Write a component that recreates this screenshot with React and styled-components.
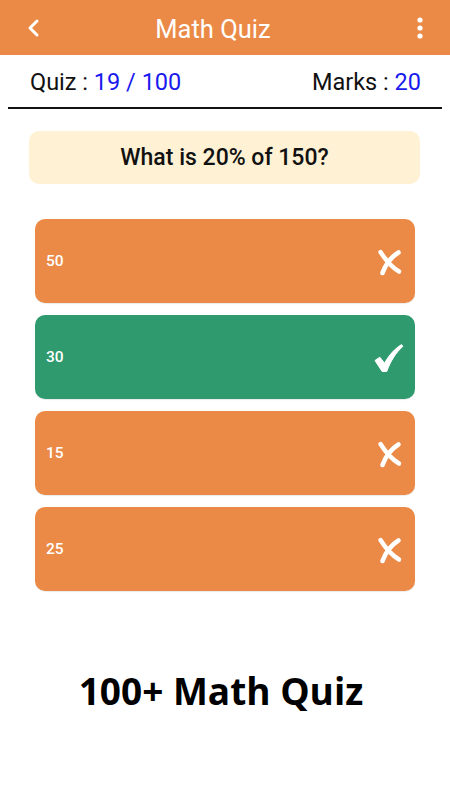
import React from 'react';
import styled, { createGlobalStyle } from 'styled-components';

const GlobalStyle = createGlobalStyle`
    html, body {
        margin: 0;
        padding: 0;
        background: #ffffff;
        font-family: Roboto, "Noto Sans", sans-serif;
    }
`;

const options = [
    { value: '50', correct: false },
    { value: '30', correct: true },
    { value: '15', correct: false },
    { value: '25', correct: false },
];

// brush style cross, white
const CrossMark = () => (
    <svg width="28" height="28" viewBox="0 0 28 28" fill="none">
        <path d="M5.5 4 C 9 9.5, 14 17.5, 24 23.5" stroke="#ffffff" strokeWidth="4.4" strokeLinecap="round" />
        <path d="M23.5 4.5 C 16 9, 11 15.5, 7.5 25" stroke="#ffffff" strokeWidth="4.6" strokeLinecap="round" />
    </svg>
);

const CheckMark = () => (
    <svg width="30" height="30" viewBox="0 0 30 30" fill="#ffffff">
        <path d="M1 17.5 L5.8 14.2 L10.6 20.2 C 15 12, 21 5.5, 27.6 1.6 L28.8 3.4 C 22 9.5, 16.5 18, 12.8 28.4 L8.2 28.6 Z" strokeLinejoin="round" stroke="#ffffff" strokeWidth="1" />
    </svg>
);

const App = () => {
    return (
        <>
            <GlobalStyle />
            <Page>
                <Header>
                    <IconButton aria-label="back">
                        <svg width="16" height="20" viewBox="0 0 16 20" fill="none">
                            <path d="M11 3 L4 10 L11 17" stroke="#ffffff" strokeWidth="3" strokeLinecap="round" strokeLinejoin="round" />
                        </svg>
                    </IconButton>
                    <Title>Math Quiz</Title>
                    <IconButton aria-label="menu">
                        <svg width="8" height="24" viewBox="0 0 8 24" fill="#ffffff">
                            <circle cx="4" cy="4" r="2.6" />
                            <circle cx="4" cy="12" r="2.6" />
                            <circle cx="4" cy="20" r="2.6" />
                        </svg>
                    </IconButton>
                </Header>

                <StatsRow>
                    <Stat>Quiz : <StatValue>19 / 100</StatValue></Stat>
                    <Stat>Marks : <StatValue>20</StatValue></Stat>
                </StatsRow>

                <QuestionBox>What is 20% of 150?</QuestionBox>

                <OptionList>
                    {options.map(opt => (
                        <Option key={opt.value} correct={opt.correct}>
                            <OptionText>{opt.value}</OptionText>
                            <MarkWrap>
                                {opt.correct ? <CheckMark /> : <CrossMark />}
                            </MarkWrap>
                        </Option>
                    ))}
                </OptionList>

                <Footer>100+ Math Quiz</Footer>
            </Page>
        </>
    )
};

const Page = styled.div`
    width: 450px;
    min-height: 800px;
    display: flex;
    flex-direction: column;
    background: #ffffff;
`;

const Header = styled.div`
    height: 55px;
    display: flex;
    align-items: center;
    padding: 0 18px 0 22px;
    background-color: #eb8a46;
`;

const IconButton = styled.div`
    width: 24px;
    height: 30px;
    display: flex;
    align-items: center;
    justify-content: center;
`;

const Title = styled.div`
    flex: 1;
    text-align: center;
    padding-right: 28px;
    font-size: 25.5px;
    color: #ffffff;
    margin-top: 2px;
`;

const StatsRow = styled.div`
    display: flex;
    justify-content: space-between;
    align-items: center;
    height: 52px;
    margin: 0 8px;
    padding: 0 21px 0 22px;
    border-bottom: 2px solid #111111;
`;

const Stat = styled.div`
    font-size: 23.5px;
    color: #111111;
    padding-top: 2px;
`;

const StatValue = styled.span`
    color: #1a1aee;
`;

const QuestionBox = styled.div`
    margin: 22px 30px 0 29px;
    height: 53px;
    display: flex;
    align-items: center;
    justify-content: center;
    background-color: #fff2d4;
    border-radius: 10px;
    font-size: 23px;
    font-weight: 500;
    color: #111111;
`;

const OptionList = styled.div`
    display: flex;
    flex-direction: column;
    gap: 12px;
    margin: 35px 35px 0 35px;
`;

const Option = styled.div`
    height: 84px;
    display: flex;
    align-items: center;
    justify-content: space-between;
    padding: 0 11px 0 11px;
    border-radius: 10px;
    background-color: ${props => props.correct ? '#2e9a6d' : '#eb8a46'};
    box-shadow: 0 1px 1px rgba(0, 0, 0, 0.08);
`;

const OptionText = styled.div`
    font-size: 15.5px;
    font-weight: 500;
    color: #ffffff;
`;

const MarkWrap = styled.div`
    display: flex;
    align-items: center;
    justify-content: center;
    width: 30px;
    height: 30px;
    margin-top: 1px;
`;

const Footer = styled.div`
    margin-top: 74px;
    text-align: center;
    padding-right: 8px;
    font-family: "Open Sans", "Noto Sans", sans-serif;
    font-size: 37px;
    font-weight: 700;
    color: #000000;
`;

export default App;
